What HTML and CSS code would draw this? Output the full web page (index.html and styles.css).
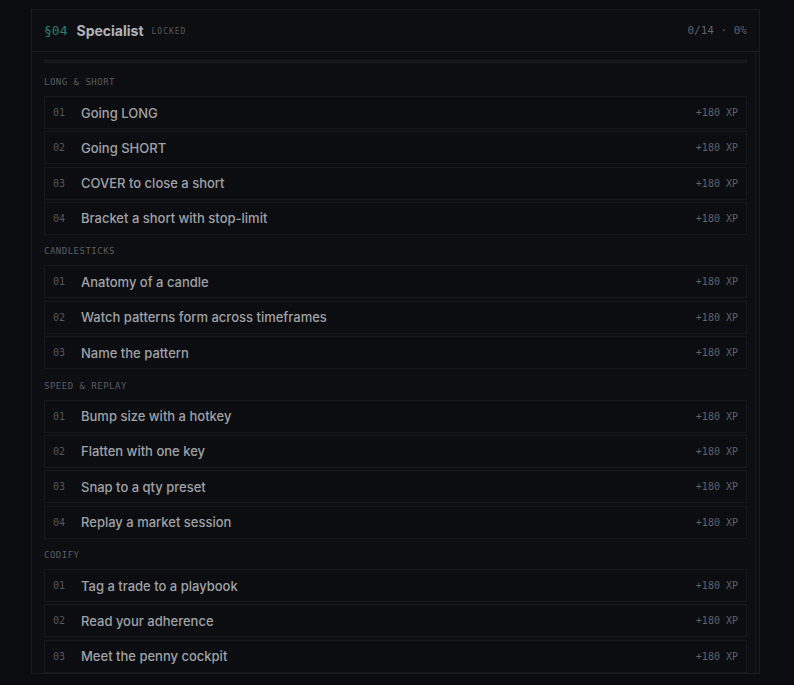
FILE: index.html
```html
<!DOCTYPE html>
<html lang="en">
<head>
  <meta charset="UTF-8" />
  <meta name="viewport" content="width=device-width, initial-scale=1.0"/>
  <title>Specialist</title>
  <link rel="stylesheet" href="styles.css">
</head>
<body>
  <div class="card">
    <div class="card-head">
      <span class="sec-num">§04</span>
      <span class="sec-title">Specialist</span>
      <span class="sec-state">LOCKED</span>
      <span class="sec-progress">0/14 · 0%</span>
    </div>

    <div class="card-body">
      <div class="track"><div class="track-fill" style="width: 0%"></div></div>

      <div class="group-label">LONG &amp; SHORT</div>
      <ul class="lessons">
        <li><span class="num">01</span><span class="name">Going LONG</span><span class="xp">+180 XP</span></li>
        <li><span class="num">02</span><span class="name">Going SHORT</span><span class="xp">+180 XP</span></li>
        <li><span class="num">03</span><span class="name">COVER to close a short</span><span class="xp">+180 XP</span></li>
        <li><span class="num">04</span><span class="name">Bracket a short with stop-limit</span><span class="xp">+180 XP</span></li>
      </ul>

      <div class="group-label">CANDLESTICKS</div>
      <ul class="lessons">
        <li><span class="num">01</span><span class="name">Anatomy of a candle</span><span class="xp">+180 XP</span></li>
        <li><span class="num">02</span><span class="name">Watch patterns form across timeframes</span><span class="xp">+180 XP</span></li>
        <li><span class="num">03</span><span class="name">Name the pattern</span><span class="xp">+180 XP</span></li>
      </ul>

      <div class="group-label">SPEED &amp; REPLAY</div>
      <ul class="lessons">
        <li><span class="num">01</span><span class="name">Bump size with a hotkey</span><span class="xp">+180 XP</span></li>
        <li><span class="num">02</span><span class="name">Flatten with one key</span><span class="xp">+180 XP</span></li>
        <li><span class="num">03</span><span class="name">Snap to a qty preset</span><span class="xp">+180 XP</span></li>
        <li><span class="num">04</span><span class="name">Replay a market session</span><span class="xp">+180 XP</span></li>
      </ul>

      <div class="group-label">CODIFY</div>
      <ul class="lessons">
        <li><span class="num">01</span><span class="name">Tag a trade to a playbook</span><span class="xp">+180 XP</span></li>
        <li><span class="num">02</span><span class="name">Read your adherence</span><span class="xp">+180 XP</span></li>
        <li><span class="num">03</span><span class="name">Meet the penny cockpit</span><span class="xp">+180 XP</span></li>
      </ul>
    </div>
  </div>
</body>
</html>
```

FILE: styles.css
```css
body {
  font-family: Inter, "Noto Sans", sans-serif;
  background: #0b0c0f;
  margin: 0;
  padding: 9px 0 0 31px;
  overflow: hidden;
}
.card {
  width: 729px;
  box-sizing: border-box;
  background: #0d0e12;
  border: 1px solid #1a1c21;
}
.card-head {
  display: flex;
  align-items: center;
  height: 41px;
  padding: 0 12px;
  border-bottom: 1px solid #1a1c21;
}
.sec-num {
  font-family: "DejaVu Sans Mono", monospace;
  font-size: 13px;
  color: #27806f;
  margin-right: 9px;
}
.sec-title {
  font-size: 14px;
  font-weight: 700;
  color: #b2b4b9;
  margin-right: 8px;
}
.sec-state {
  font-family: "DejaVu Sans Mono", monospace;
  font-size: 8px;
  letter-spacing: 1px;
  color: #55585e;
  margin-top: 2px;
}
.sec-progress {
  margin-left: auto;
  font-family: "DejaVu Sans Mono", monospace;
  font-size: 11px;
  color: #5e6167;
}
.card-body {
  margin-right: 3px;
  padding: 8px 8px 0 12px;
  border-right: 1px solid #16181c;
}
.track {
  height: 3px;
  box-sizing: border-box;
  margin-bottom: 2.5px;
  border: 1px solid #1a1c21;
  background: #101115;
}
.track-fill {
  height: 100%;
  background: #27806f;
}
.group-label {
  font-family: "DejaVu Sans Mono", monospace;
  font-size: 9px;
  line-height: 12px;
  letter-spacing: 0.5px;
  color: #5a5d63;
  padding: 10.5px 0 8px;
}
.lessons {
  list-style: none;
  margin: 0;
  padding: 0;
  display: flex;
  flex-direction: column;
  gap: 2.33px;
}
.lessons li {
  display: flex;
  align-items: center;
  height: 33px;
  box-sizing: border-box;
  padding: 0 8px;
  border: 1px solid #16181c;
  background: #0c0d11;
}
.num {
  width: 28px;
  font-family: "DejaVu Sans Mono", monospace;
  font-size: 10px;
  color: #54575d;
}
.name {
  font-size: 13px;
  font-weight: 500;
  color: #a0a2a7;
}
.xp {
  margin-left: auto;
  font-family: "DejaVu Sans Mono", monospace;
  font-size: 10px;
  color: #5f6268;
}
```
